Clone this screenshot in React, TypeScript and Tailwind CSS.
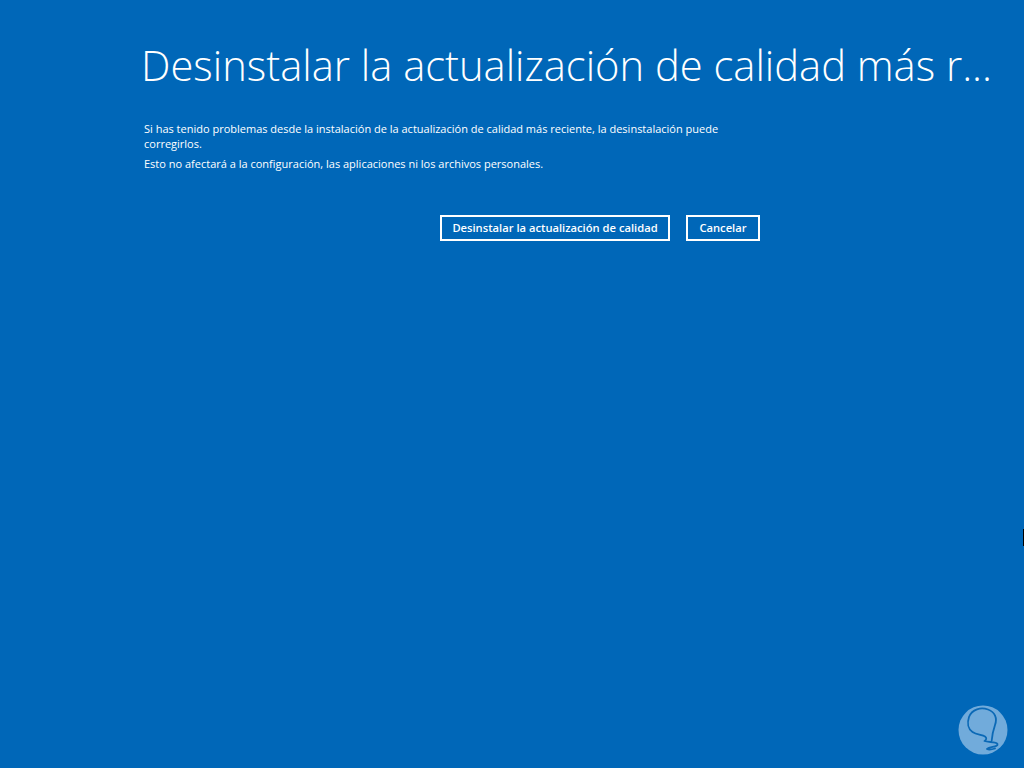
export default function App() {
  return (
    <div className="relative h-[768px] w-[1024px] overflow-hidden bg-[#0067b8] font-['Open_Sans','Noto_Sans',sans-serif] text-white">
      <div className="flex flex-col pl-[141px] pt-[37px]">
        <h1 className="whitespace-nowrap text-[41.7px] leading-[56px] font-light">
          Desinstalar la actualización de calidad más r...
        </h1>
        <div className="mt-[28px] w-[620px] pl-[3px] text-[11px] leading-[15px]">
          <p>
            Si has tenido problemas desde la instalación de la actualización de calidad más reciente, la desinstalación puede corregirlos.
          </p>
          <p className="mt-[5px]">Esto no afectará a la configuración, las aplicaciones ni los archivos personales.</p>
        </div>
        <div className="mt-[44px] ml-[299px] flex gap-[16px]">
          <button className="h-[26px] w-[230px] border-2 border-white text-[11.2px] font-semibold">
            Desinstalar la actualización de calidad
          </button>
          <button className="h-[26px] w-[74px] border-2 border-white text-[11.2px] font-semibold">Cancelar</button>
        </div>
      </div>

      {/* logo */}
      <svg className="absolute left-[958px] top-[705px]" width="50" height="50" viewBox="0 0 50 50">
        <circle cx="25" cy="25" r="24.5" fill="#71abdb" />
        <path
          d="M33.7 35.5C34 30 35 26 37 20C39.5 13 37 7 30 4.5C23 2 14 4 11 12C9 18 10 24 14.5 27C18 29.5 24 30 27 31.5C29 33 28.5 35 26.5 36C30 37.5 38.5 36.5 39.5 39C40.5 42 31.5 41.5 29 44C31 45 34 44.5 37 43.5"
          fill="none"
          stroke="#0b69b6"
          strokeWidth="1.8"
          strokeLinecap="round"
          strokeLinejoin="round"
        />
      </svg>

      {/* black sliver on the right edge */}
      <div className="absolute right-0 top-[529px] h-[17px] w-px bg-black" />
    </div>
  );
}
